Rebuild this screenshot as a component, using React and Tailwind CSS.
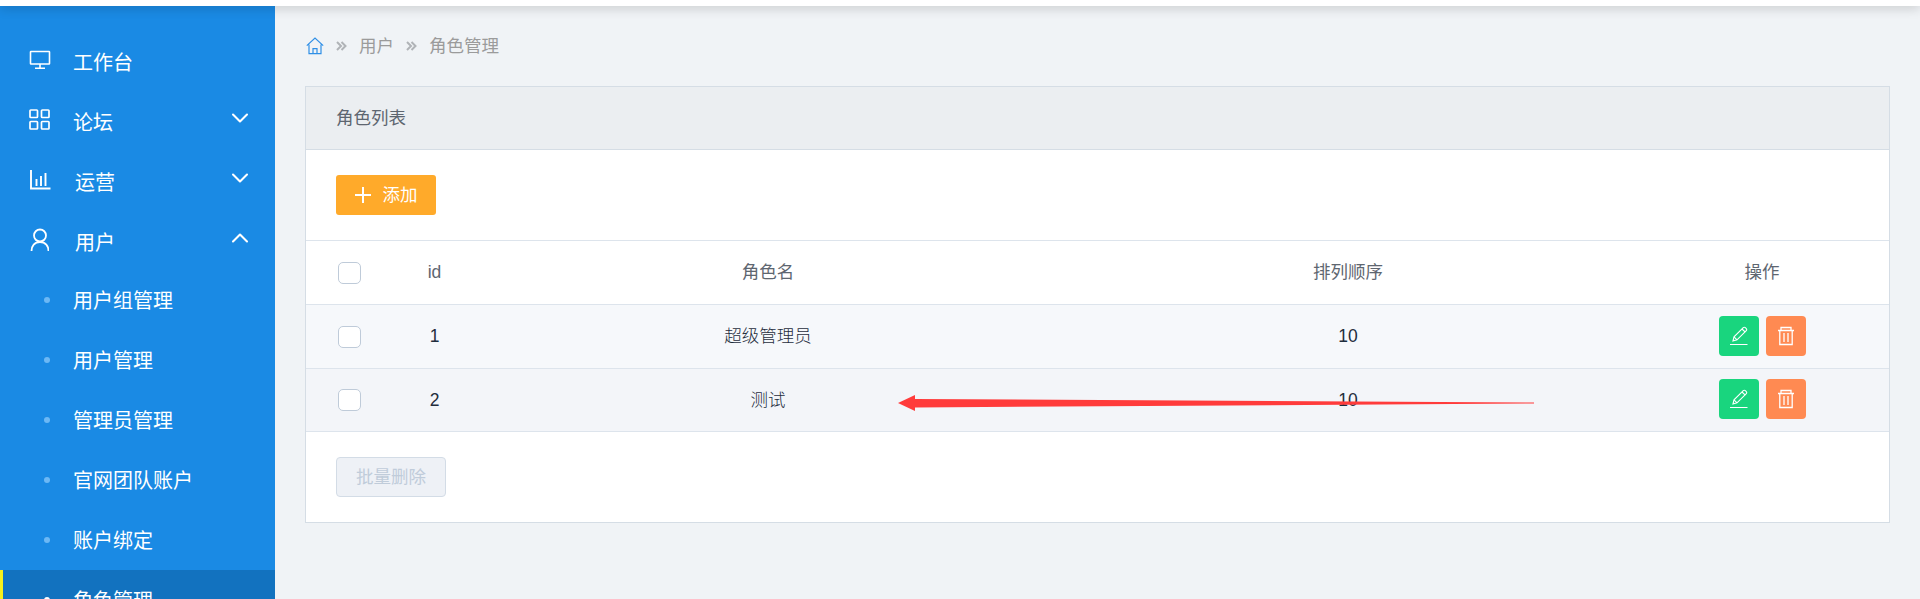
import { ChevronDown, ChevronUp } from 'lucide-react';

function MonitorIcon() {
  return (
    <svg width="22" height="20" viewBox="0 0 22 20" fill="none" stroke="currentColor" strokeWidth="1.6">
      <rect x="1.500" y="1.500" width="19" height="12.500" rx="0.500" />
      <path d="M11 14v4M6 18.200h10" />
    </svg>
  );
}

function GridIcon() {
  return (
    <svg width="22" height="22" viewBox="0 0 22 22" fill="none" stroke="currentColor" strokeWidth="1.7">
      <rect x="1" y="1" width="7.500" height="7.500" rx="0.800" />
      <rect x="12.500" y="1" width="7.500" height="7.500" rx="0.800" />
      <rect x="1" y="12.500" width="7.500" height="7.500" rx="0.800" />
      <rect x="12.500" y="12.500" width="7.500" height="7.500" rx="0.800" />
    </svg>
  );
}

function ChartIcon() {
  return (
    <svg width="22" height="20" viewBox="0 0 22 20" fill="none" stroke="currentColor" strokeWidth="1.9">
      <path d="M2 0v18.500H21.500M7.500 9v7M12 6v10M16.500 3v13" />
    </svg>
  );
}

function UserIcon() {
  return (
    <svg width="20" height="24" viewBox="0 0 20 24" fill="none" stroke="currentColor" strokeWidth="1.8">
      <circle cx="11" cy="7.500" r="6" />
      <path d="M2.500 23c0-5 3-9 8.500-9s8.500 4 8.500 9" />
    </svg>
  );
}

function HomeIcon() {
  return (
    <svg width="18" height="18" viewBox="0 0 18 18" fill="none" stroke="#2f8fe6" strokeWidth="1.2">
      <path d="M0.800 8.600 9 1l8.200 7.600M3 7.500v9.200h12V7.500M7 16.700v-5h4v5" />
    </svg>
  );
}

function Crumb() {
  return (
    <svg width="11" height="10" viewBox="0 0 11 10" fill="none" stroke="#b0b3b7" strokeWidth="2">
      <path d="M1 1l4 4-4 4M5.500 1l4 4-4 4" />
    </svg>
  );
}

function PencilIcon() {
  return (
    <svg width="20" height="20" viewBox="0 0 20 20" fill="none" stroke="white" strokeWidth="1.1">
      <path d="M4 15l1-4.200L14.300 1.600a1.400 1.400 0 0 1 2 0l1 1a1.400 1.400 0 0 1 0 2L8 13.800z" />
      <path d="M13 3l3.300 3.200M5 10.800l3 3M1 18.500h17.500" />
    </svg>
  );
}

function TrashIcon() {
  return (
    <svg width="18" height="20" viewBox="0 0 18 20" fill="none" stroke="white" strokeWidth="1.3">
      <path d="M1 4.500h16M4 4.500V1.500h10v3M2.800 4.500V18.500h12.400V4.500M7 7v9M11 7v9" />
    </svg>
  );
}

function MenuRow({ icon, label, textClass, chevron }) {
  return (
    <div className="h-[60px] flex items-center text-white">
      <div className="w-[73px] pl-[29px] pb-[1px] shrink-0">{icon}</div>
      <span className={`pt-[5px] ${textClass || ''}`}>{label}</span>
      {chevron === 'down' && <ChevronDown className="ml-auto mr-[21px] mb-[4px]" size={28} strokeWidth={1.8} />}
      {chevron === 'up' && <ChevronUp className="ml-auto mr-[21px] mb-[4px]" size={28} strokeWidth={1.8} />}
    </div>
  );
}

function SubRow({ label, active }) {
  return (
    <div className={`h-[60px] flex items-center text-white border-l-[3px] ${active ? 'bg-[#1272bf] border-[#f5f01c]' : 'border-transparent'}`}>
      <span className={`ml-[41px] w-[6px] h-[6px] rounded-full shrink-0 ${active ? 'bg-white' : 'bg-[#6cb8f5]'}`} />
      <span className="ml-[23px] pt-[2px]">{label}</span>
    </div>
  );
}

function Check() {
  return <span className="ml-[32px] block w-[23px] h-[22px] rounded-[5px] bg-white border border-[#bfcbd9]" />;
}

function Row({ id, name, order, rowClass }) {
  return (
    <div className={`grid grid-cols-[88px_81px_586px_574px_254px] items-center border-b border-[#dde4ec] text-[#1f2d3d] font-light text-center ${rowClass}`}>
      <Check />
      <span>{id}</span>
      <span>{name}</span>
      <span>{order}</span>
      <div className="flex justify-center gap-[7px] mb-[2px]">
        <button className="w-[40px] h-[40px] rounded-[4px] bg-[#19d57e] flex items-center justify-center">
          <PencilIcon />
        </button>
        <button className="w-[40px] h-[40px] rounded-[4px] bg-[#ff8a52] flex items-center justify-center">
          <TrashIcon />
        </button>
      </div>
    </div>
  );
}

export default function App() {
  return (
    <div className="relative h-[599px] overflow-hidden bg-[#f0f3f6] font-['Liberation_Sans','Noto_Sans_CJK_SC',sans-serif]">
      <div className="relative z-10 h-[6px] bg-white shadow-[0_1px_12px_rgba(0,0,0,0.26)]" />
      <div className="flex h-[593px]">
        <aside className="w-[275px] shrink-0 bg-[#1a8ae4] pt-[24px] text-[20px] overflow-hidden">
          <MenuRow icon={<MonitorIcon />} label="工作台" />
          <MenuRow icon={<GridIcon />} label="论坛" chevron="down" />
          <MenuRow icon={<ChartIcon />} label="运营" textClass="ml-[2px]" chevron="down" />
          <MenuRow icon={<UserIcon />} label="用户" textClass="ml-[2px]" chevron="up" />
          <SubRow label="用户组管理" />
          <SubRow label="用户管理" />
          <SubRow label="管理员管理" />
          <SubRow label="官网团队账户" />
          <SubRow label="账户绑定" />
          <SubRow label="角色管理" active />
        </aside>

        <main className="flex-1 pl-[30px] pr-[31px] text-[17.5px]">
          <div className="h-[80px] flex items-center gap-[12px] text-[#9b9b9b]">
            <span className="ml-[1px]"><HomeIcon /></span>
            <Crumb />
            <span>用户</span>
            <Crumb />
            <span>角色管理</span>
          </div>

          <div className="relative w-[1585px] border border-[#d5dde5] bg-white">
            <div className="h-[63px] pl-[30px] flex items-center bg-[#ebeef1] border-b border-[#d5dde5] text-[#5e6670]">
              <span className="pt-[1px]">角色列表</span>
            </div>
            <div className="h-[91px] pl-[30px] flex items-center border-b border-[#dde4ec]">
              <button className="w-[100px] h-[40px] rounded-[3px] bg-[#ffaa2a] text-white flex items-center justify-center gap-[12px]">
                <svg width="16" height="16" viewBox="0 0 16 16" stroke="white" strokeWidth="2"><path d="M8 0v16M0 8h16" /></svg>
                添加
              </button>
            </div>
            <div className="grid grid-cols-[88px_81px_586px_574px_254px] items-center h-[64px] border-b border-[#dde4ec] text-[#5e6670] text-center">
              <Check />
              <span>id</span>
              <span>角色名</span>
              <span>排列顺序</span>
              <span>操作</span>
            </div>
            <Row id="1" name="超级管理员" order="10" rowClass="h-[64px] bg-[#f6f8fb]" />
            <Row id="2" name="测试" order="10" rowClass="h-[63px] bg-[#f3f5f9]" />
            <div className="h-[90px] pl-[30px] pt-[25px]">
              <button className="w-[110px] h-[40px] rounded-[4px] bg-[#eef1f6] border border-[#d3dce6] text-[#c0ccda]">
                批量删除
              </button>
            </div>
            {/* 截图上手画的红色箭头 */}
            <svg className="absolute left-[592px] top-[305px]" width="636" height="22" viewBox="0 0 636 22">
              <path d="M0 11 17 3V7L636 10.500V11.500L17 15.500V19Z" fill="#ff3b3b" />
            </svg>
          </div>
        </main>
      </div>
    </div>
  );
}
